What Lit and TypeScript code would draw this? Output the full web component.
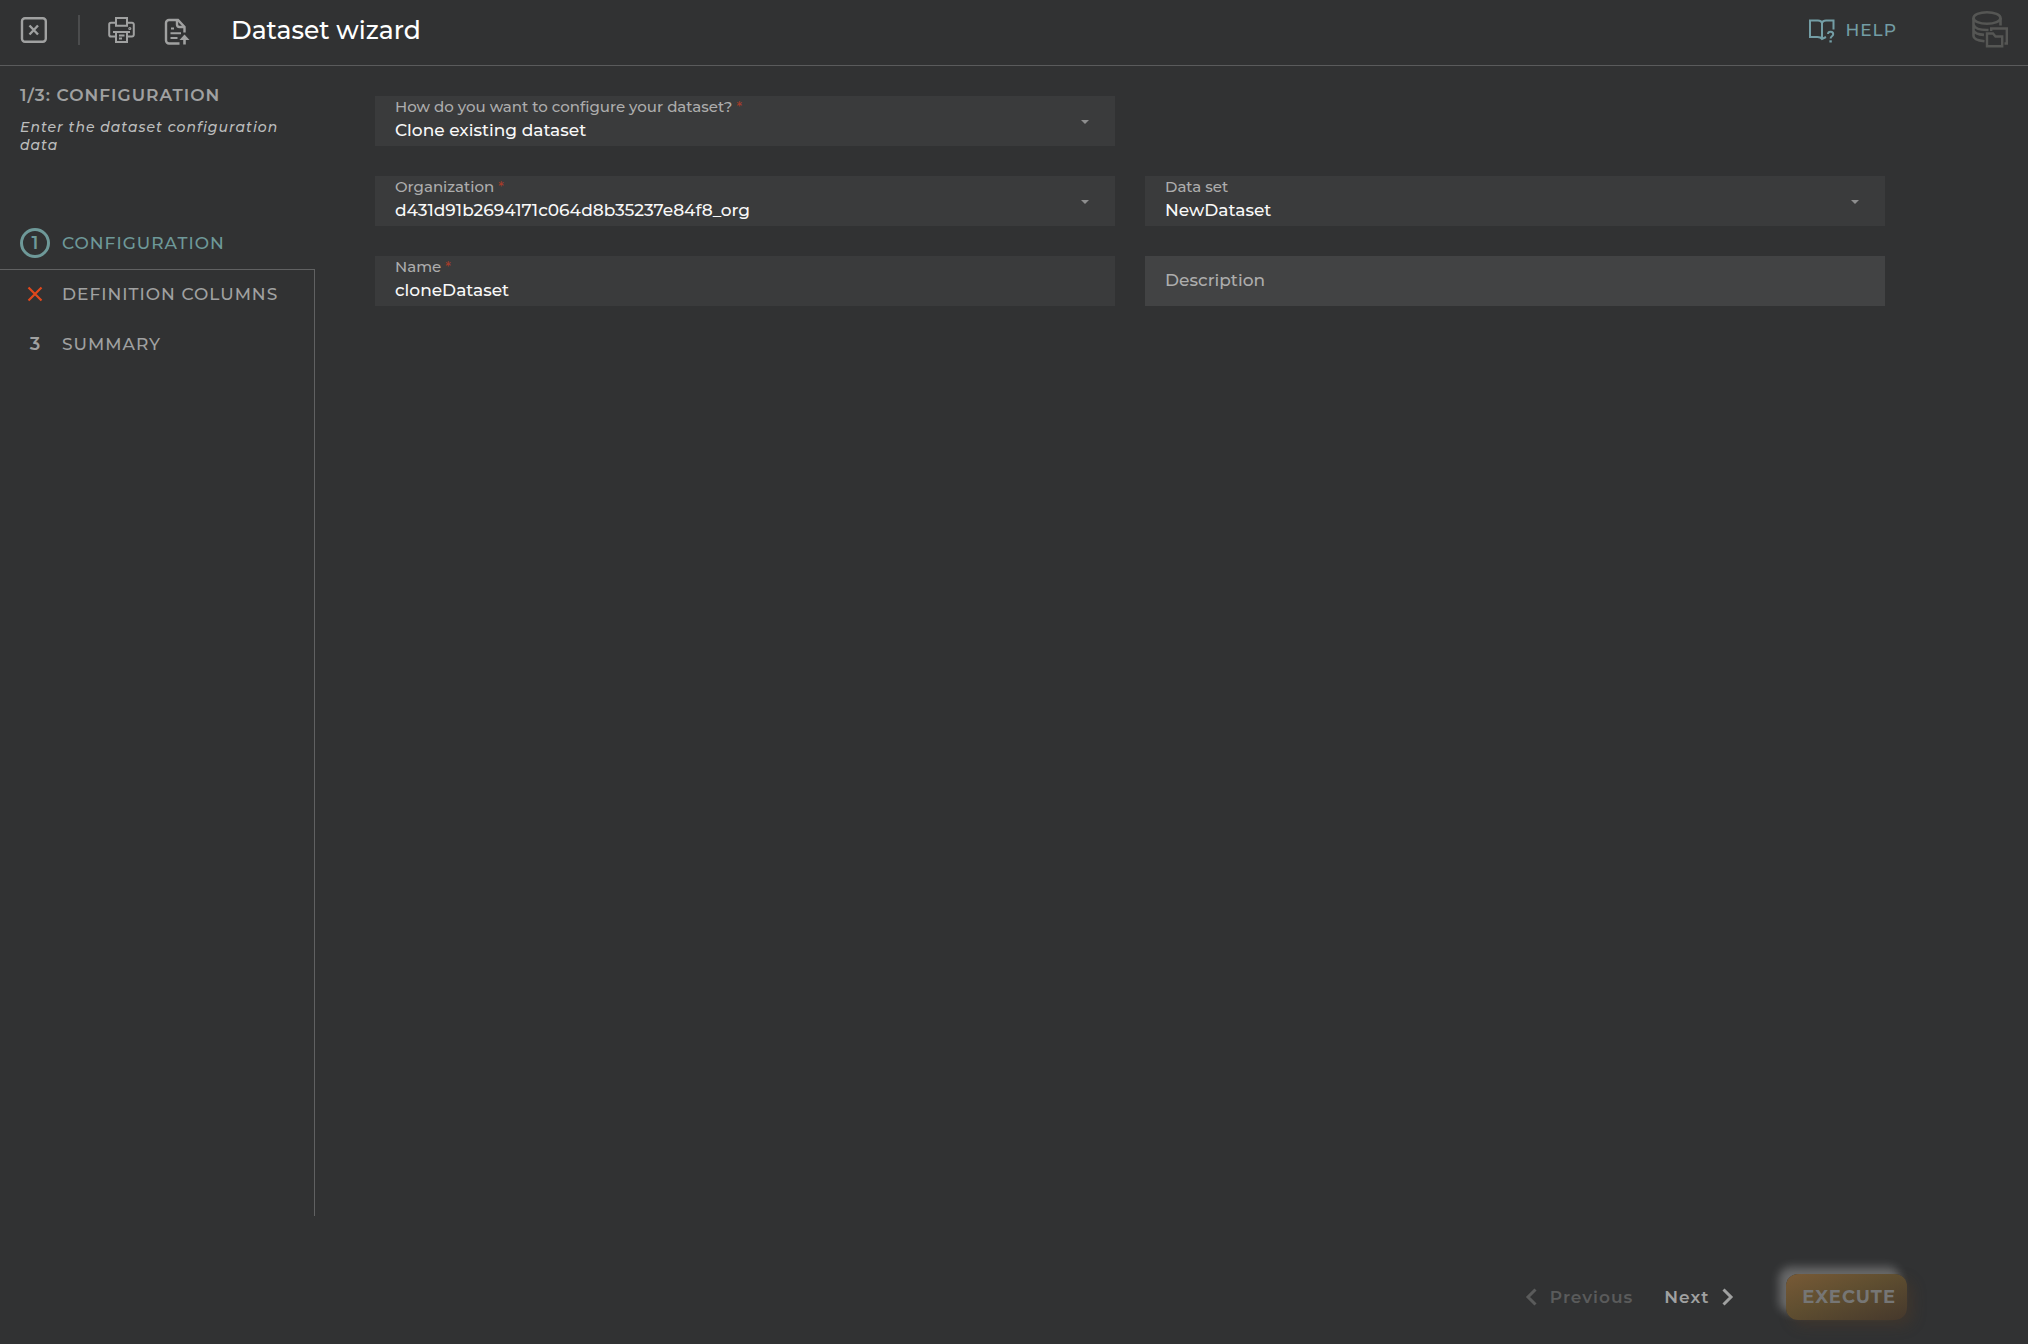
import { LitElement, html, css, nothing } from "lit";
import { customElement, property, state } from "lit/decorators.js";
import { classMap } from "lit/directives/class-map.js";

const FONT = css`Montserrat, Inter, "Open Sans", sans-serif`;

/** One form field: a floating label over a text box or a drop-down. */
@customElement("wizard-field")
export class WizardField extends LitElement {
  @property() label = "";
  @property() value = "";
  @property() name = "";
  @property({ type: Boolean }) required = false;
  @property({ attribute: false }) options?: string[];

  static styles = css`
    :host {
      display: block;
      min-width: 0;
    }
    .field {
      display: grid;
      grid-template: 50px / minmax(0, 1fr) auto;
      background: #3a3b3c;
      font-family: ${FONT};
      font-weight: 500;
    }
    .empty {
      background: #424344;
    }
    .label {
      grid-area: 1 / 1;
      padding: 2px 20px 0;
      font-size: 15px;
      line-height: 18px;
      color: #adadad;
      pointer-events: none;
      z-index: 1;
    }
    .empty .label {
      align-self: center;
      padding: 0 20px 2px;
      font-size: 17px;
      line-height: 20px;
    }
    .mark {
      color: #a33c2a;
      font-size: 14px;
    }
    .control {
      grid-area: 1 / 1 / 2 / 3;
      box-sizing: border-box;
      width: 100%;
      height: 50px;
      margin: 0;
      border: 0;
      border-radius: 0;
      padding: 18px 20px 0;
      background: transparent;
      color: #f8f8f8;
      font: 500 17px ${FONT};
      appearance: none;
    }
    .control:focus-visible {
      outline: 1px solid #6b9494;
    }
    .control option {
      background: #3a3b3c;
    }
    .arrow {
      grid-area: 1 / 2;
      align-self: center;
      margin: 2px 26px 0 0;
      width: 8px;
      height: 4px;
      fill: #8d8e8e;
      pointer-events: none;
      z-index: 1;
    }
  `;

  render() {
    const empty = !this.options && this.value === "";
    return html`
      <div class=${classMap({ field: true, empty })}>
        <label class="label" for="control"
          >${this.label}${this.required ? html` <span class="mark">*</span>` : nothing}</label
        >
        ${this.options
          ? html`<select class="control" id="control" name=${this.name}>
                ${this.options.map((o) => html`<option ?selected=${o === this.value}>${o}</option>`)}
              </select>
              <svg class="arrow" viewBox="0 0 8 4" aria-hidden="true"><path d="M0 0h8L4 4z" /></svg>`
          : html`<input
              class="control"
              id="control"
              type="text"
              name=${this.name}
              .value=${this.value}
              @input=${(e: Event) => (this.value = (e.target as HTMLInputElement).value)}
            />`}
      </div>
    `;
  }
}

interface Step {
  label: string;
  invalid?: boolean;
}

@customElement("app-root")
export class AppRoot extends LitElement {
  @state() private current = 0;

  private steps: Step[] = [
    { label: "Configuration" },
    { label: "Definition columns", invalid: true },
    { label: "Summary" },
  ];

  static styles = css`
    :host {
      display: flex;
      flex-direction: column;
      min-height: 100vh;
      background: #313233;
      color: #a0a1a1;
      font-family: ${FONT};
    }
    button,
    a {
      font: inherit;
      color: inherit;
      letter-spacing: inherit;
      text-decoration: none;
    }
    button {
      margin: 0;
      border: 0;
      padding: 0;
      background: none;
      cursor: pointer;
    }
    svg {
      display: block;
      fill: none;
      stroke: currentColor;
    }
    .bar {
      display: flex;
      align-items: center;
      box-sizing: border-box;
      height: 66px;
      padding: 0 18px 6px 20px;
      border-bottom: 1px solid #5a5b5c;
    }
    .divider {
      width: 2px;
      height: 30px;
      margin: 0 28px 0 31px;
      background: #4b4c4d;
    }
    .print {
      margin-right: 28px;
    }
    .title {
      flex: 1;
      margin: 0 0 0 41px;
      font-size: 25px;
      line-height: 32px;
      font-weight: 500;
      color: #fff;
    }
    .help {
      display: flex;
      align-items: center;
      gap: 10px;
      margin-right: 75px;
      color: #739da5;
      font-size: 17px;
      line-height: 20px;
      font-weight: 500;
      letter-spacing: 1px;
    }
    .brand {
      color: #555654;
    }
    .body {
      flex: 1;
      display: flex;
    }
    .side {
      display: flex;
      flex-direction: column;
      width: 315px;
      flex: none;
    }
    .intro {
      box-sizing: border-box;
      height: 152px;
      padding: 19px 20px 0;
    }
    .heading {
      margin: 0 0 13px;
      font-size: 17px;
      line-height: 20px;
      font-weight: 600;
      letter-spacing: 1px;
      text-transform: uppercase;
    }
    .hint {
      margin: 0;
      font-size: 14px;
      line-height: 18px;
      font-weight: 500;
      font-style: italic;
      letter-spacing: 1px;
      color: #bcbdbd;
    }
    .steps {
      flex: 1;
      display: flex;
      flex-direction: column;
      margin: 0;
      padding: 0;
      list-style: none;
    }
    .row {
      border-right: 1px solid #606162;
    }
    .row.active {
      border-right: 0;
      border-bottom: 1px solid #606162;
    }
    .row:last-child {
      flex: 1;
    }
    .step {
      display: flex;
      align-items: center;
      gap: 12px;
      box-sizing: border-box;
      width: 100%;
      height: 50px;
      padding: 0 0 2px 20px;
      font-size: 17px;
      line-height: 20px;
      font-weight: 500;
      letter-spacing: 1px;
      text-transform: uppercase;
      text-align: left;
    }
    .active .step {
      height: 51px;
      color: #6e9999;
    }
    .badge {
      display: grid;
      place-items: center;
      box-sizing: border-box;
      width: 30px;
      height: 30px;
      font-size: 18px;
      font-weight: 600;
      letter-spacing: 0;
    }
    .active .badge {
      border: 3px solid currentColor;
      border-radius: 50%;
    }
    .cross {
      color: #e0481c;
    }
    .form {
      flex: 1;
      display: grid;
      grid-template-columns: repeat(2, minmax(0, 1fr));
      grid-auto-rows: 50px;
      gap: 30px;
      padding: 30px 143px 30px 60px;
    }
    .first {
      grid-column: 1;
    }
    .foot {
      display: flex;
      align-items: center;
      justify-content: flex-end;
      height: 128px;
      box-sizing: border-box;
      padding: 33px 121px 0 20px;
      font-size: 17px;
      line-height: 20px;
      font-weight: 600;
      letter-spacing: 1px;
    }
    .nav {
      display: flex;
      align-items: center;
      gap: 13px;
      margin-right: 31px;
    }
    .nav:disabled {
      color: #5a5b5b;
      cursor: default;
    }
    .run {
      height: 46px;
      margin-left: 21px;
      padding: 0 11px 0 16px;
      border-radius: 12px;
      background: linear-gradient(160deg, #785a36, #5f4e30 45%, #45382c);
      box-shadow:
        -7px -7px 10px rgba(255, 255, 255, 0.28),
        6px 6px 14px rgba(92, 62, 34, 0.3);
      color: #767675;
      font-size: 18px;
      font-weight: 700;
    }
  `;

  render() {
    const step = this.steps[this.current];
    return html`
      <header class="bar">
        <button aria-label="Close">
          <svg width="27" height="26" viewBox="0 0 27 26" stroke-width="2.400">
            <rect x="2" y="1.200" width="23.800" height="23.600" rx="3" />
            <path d="M9.500 8.500l8.500 9M18 8.500l-8.500 9" />
          </svg>
        </button>
        <span class="divider"></span>
        <button class="print" aria-label="Print">
          <svg width="27" height="26" viewBox="0 0 27 26" stroke-width="2">
            <path d="M8 8.500V1h11v7.500" />
            <path d="M7.500 19.500H3a1.800 1.800 0 0 1-1.800-1.800V7.500A1.800 1.800 0 0 1 3 5.700h5M19 5.700h5a1.800 1.800 0 0 1 1.800 1.800v10.200a1.800 1.800 0 0 1-1.800 1.800h-4.500M7 8.700h13" />
            <path d="M5 15h17M8 15v10h11V15M11 18.500h5.500M11 21.500h3" />
            <circle cx="21.800" cy="11.500" r=".6" />
          </svg>
        </button>
        <button aria-label="Export document">
          <svg width="27" height="30" viewBox="0 0 27 30" stroke-width="2.400">
            <path d="M16.500 28.500H6a3 3 0 0 1-3-3V8a3 3 0 0 1 3-3h9l6.500 7v5.500" />
            <path d="M14 5v4.500a2.500 2.500 0 0 0 2.500 2.500h5" />
            <path d="M8 13.500h3M7.500 18.300h10.500M7.500 23h7" stroke-width="2" />
            <path d="M21.500 29.500V22" stroke-width="2.600" />
            <path d="M16.500 25l5-5.500 5 5.500z" fill="currentColor" stroke="none" />
          </svg>
        </button>
        <h1 class="title">Dataset wizard</h1>
        <a class="help" href="#help">
          <svg width="26" height="26" viewBox="0 0 26 26" stroke-width="2">
            <path d="M17 20l-4 2c-1-1.500-3-2-4.500-2H1V3.500h8c2 0 3.500.8 4 2.500.5-1.700 2-2.500 4-2.500h7.500v9M13 6v16" />
            <path d="M19 17c.2-3.200 5.300-3 5.200.2 0 2.200-2.600 1.800-2.600 4.300" />
            <path d="M20.400 23.300h2.400v2.200h-2.400z" fill="currentColor" stroke="none" />
          </svg>
          <span>HELP</span>
        </a>
        <svg class="brand" width="38" height="40" viewBox="0 0 38 40" stroke-width="2.600" aria-hidden="true">
          <ellipse cx="15" cy="8" rx="13.500" ry="5.800" />
          <path d="M1.500 8v18c0 2.800 4.500 4.600 11 5.200M28.500 8v7.500M1.500 14.500c1 3.500 6.500 5.500 13.500 5.500h1.500M1.500 20.500c1 2.600 5 4 10.500 4.400" />
          <path d="M15 23.500h6l2.500 3h6.700v9.700H15z" stroke-width="2.400" />
          <path d="M19.200 21v-2.500h6.300l2-0h7.300v15h-2.300" stroke-width="2.400" />
        </svg>
      </header>

      <div class="body">
        <aside class="side">
          <div class="intro">
            <h2 class="heading">${this.current + 1}/${this.steps.length}: ${step.label}</h2>
            <p class="hint">Enter the dataset configuration data</p>
          </div>
          <ol class="steps">
            ${this.steps.map(
              (s, i) => html`
                <li class=${classMap({ row: true, active: i === this.current })}>
                  <button class="step" @click=${() => (this.current = i)}>
                    <span class="badge"
                      >${s.invalid
                        ? html`<svg class="cross" width="16" height="16" viewBox="0 0 16 16" stroke-width="2.200">
                            <path d="M1.500 1.500l13 13M14.500 1.500l-13 13" />
                          </svg>`
                        : i + 1}</span
                    >
                    <span>${s.label}</span>
                  </button>
                </li>
              `,
            )}
          </ol>
        </aside>

        <main class="form">
          <wizard-field
            class="first"
            label="How do you want to configure your dataset?"
            name="mode"
            value="Clone existing dataset"
            required
            .options=${["Clone existing dataset"]}
          ></wizard-field>
          <wizard-field
            class="first"
            label="Organization"
            name="organization"
            value="d431d91b2694171c064d8b35237e84f8_org"
            required
            .options=${["d431d91b2694171c064d8b35237e84f8_org"]}
          ></wizard-field>
          <wizard-field label="Data set" name="dataset" value="NewDataset" .options=${["NewDataset"]}></wizard-field>
          <wizard-field label="Name" name="name" value="cloneDataset" required></wizard-field>
          <wizard-field label="Description" name="description"></wizard-field>
        </main>
      </div>

      <footer class="foot">
        <button class="nav" ?disabled=${this.current === 0} @click=${() => this.current--}>
          <svg width="12" height="18" viewBox="0 0 12 18" stroke-width="3"><path d="M10.500 1.500L3 9l7.500 7.500" /></svg>
          <span>Previous</span>
        </button>
        <button class="nav" ?disabled=${this.current === this.steps.length - 1} @click=${() => this.current++}>
          <span>Next</span>
          <svg width="12" height="18" viewBox="0 0 12 18" stroke-width="3"><path d="M1.500 1.500L9 9l-7.500 7.500" /></svg>
        </button>
        <button class="run" disabled>EXECUTE</button>
      </footer>
    `;
  }
}
